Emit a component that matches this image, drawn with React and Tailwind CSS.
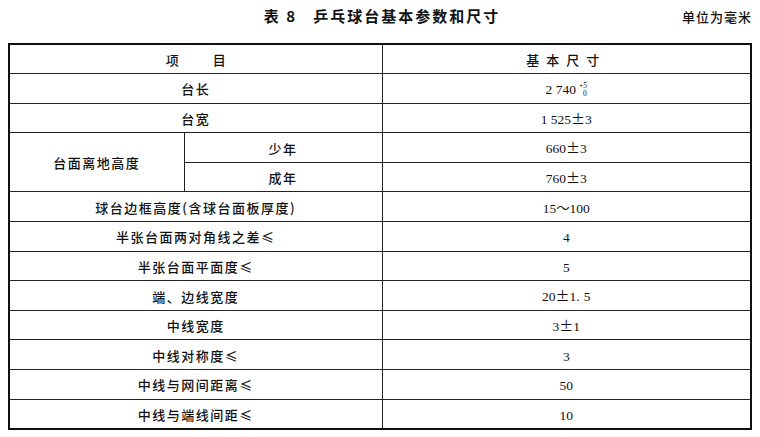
import React from "react";

const cjk = { fontFamily: '"Noto Sans CJK SC", "Noto Sans", sans-serif' };
const serif = { fontFamily: '"Liberation Serif", "Noto Sans CJK SC", serif' };

// 全角正负号
function PM() {
  return (
    <span className="inline-block w-[14px] text-center text-[14px] leading-none" style={cjk}>
      ±
    </span>
  );
}

const rows = [
  { item: "台宽", value: <>1 525<PM />3</> },
];

const tail = [
  { item: "球台边框高度(含球台面板厚度)", value: "15～100" },
  { item: "半张台面两对角线之差≤", value: "4" },
  { item: "半张台面平面度≤", value: "5" },
  { item: "端、边线宽度", value: <>20<PM />1.<span className="inline-block w-[4px]" />5</> },
  { item: "中线宽度", value: <>3<PM />1</> },
  { item: "中线对称度≤", value: "3" },
  { item: "中线与网间距离≤", value: "50" },
  { item: "中线与端线间距≤", value: "10" },
];

function Cell({ children, className = "", ...rest }) {
  return (
    <td
      className={"border border-[#222] text-center align-middle p-0 " + className}
      {...rest}
    >
      {children}
    </td>
  );
}

function Item({ children }) {
  return (
    <span className="text-[13px] font-medium tracking-[1.5px] text-[#111]" style={cjk}>
      {children}
    </span>
  );
}

function Val({ children }) {
  return (
    <span className="text-[13.5px] text-[#111]" style={serif}>
      {children}
    </span>
  );
}

export default function App() {
  return (
    <div className="w-[760px] h-[437px] bg-white px-2 pt-[5px] overflow-hidden">
      {/* 标题 */}
      <div className="grid grid-cols-[1fr_auto_1fr] items-center h-[20px]">
        <div />
        <div className="text-[15px] font-bold tracking-[2px] text-[#111] pl-[4px]" style={cjk}>
          表 8<span className="inline-block w-[16px]" />乒乓球台基本参数和尺寸
        </div>
        <div className="justify-self-end text-[13px] font-medium tracking-[1px] text-[#111]" style={cjk}>
          单位为毫米
        </div>
      </div>

      <table className="mt-[18px] w-[744px] border-collapse border-2 border-[#111] table-fixed">
        <colgroup>
          <col className="w-[175px]" />
          <col className="w-[198px]" />
          <col />
        </colgroup>
        <tbody>
          <tr className="h-[29.6px]">
            <Cell colSpan={2}>
              <span className="text-[13px] font-medium text-[#111]" style={cjk}>
                项<span className="inline-block w-[34px]" />目
              </span>
            </Cell>
            <Cell>
              <span className="text-[13px] font-medium tracking-[7px] text-[#111]" style={cjk}>
                基本尺寸
              </span>
            </Cell>
          </tr>
          <tr className="h-[29.6px]">
            <Cell colSpan={2}>
              <Item>台长</Item>
            </Cell>
            <Cell>
              <span className="inline-flex items-center text-[13.5px] text-[#111]" style={serif}>
                <span>2 740</span>
                <span className="flex flex-col leading-[8px] text-[7.5px] ml-[3px]">
                  <span>+5</span>
                  <span className="pl-[4px]">0</span>
                </span>
              </span>
            </Cell>
          </tr>
          {rows.map((r) => (
            <tr key={r.item} className="h-[29.6px]">
              <Cell colSpan={2}>
                <Item>{r.item}</Item>
              </Cell>
              <Cell>
                <Val>{r.value}</Val>
              </Cell>
            </tr>
          ))}
          <tr className="h-[29.6px]">
            <Cell rowSpan={2}>
              <Item>台面离地高度</Item>
            </Cell>
            <Cell>
              <Item>少年</Item>
            </Cell>
            <Cell>
              <Val>660<PM />3</Val>
            </Cell>
          </tr>
          <tr className="h-[29.6px]">
            <Cell>
              <Item>成年</Item>
            </Cell>
            <Cell>
              <Val>760<PM />3</Val>
            </Cell>
          </tr>
          {tail.map((r) => (
            <tr key={r.item} className="h-[29.6px]">
              <Cell colSpan={2}>
                <Item>{r.item}</Item>
              </Cell>
              <Cell>
                <Val>{r.value}</Val>
              </Cell>
            </tr>
          ))}
        </tbody>
      </table>
    </div>
  );
}
